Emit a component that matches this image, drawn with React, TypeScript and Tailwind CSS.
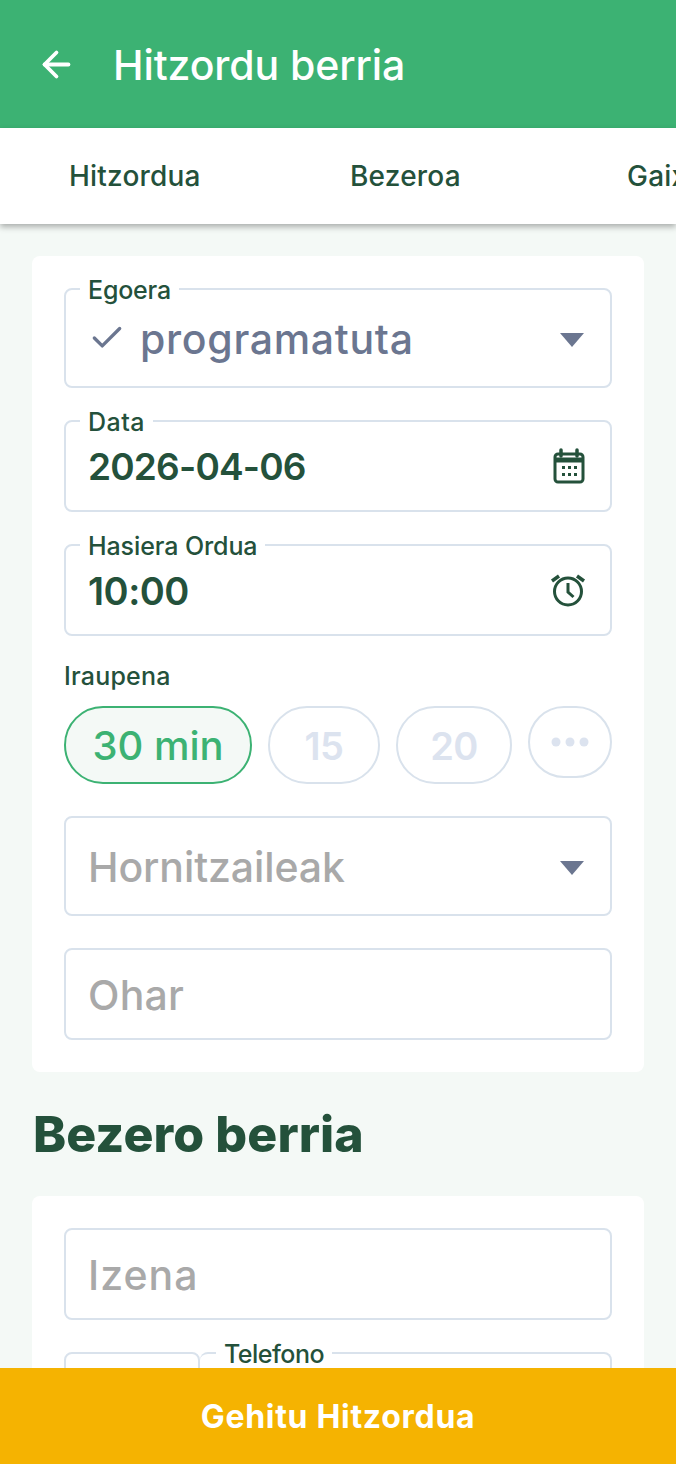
import React from "react";
import { ArrowLeft, Check } from "lucide-react";

const FONT = "font-['Inter','Liberation_Sans',sans-serif]";

function Caret() {
  return (
    <svg width="24" height="14" viewBox="0 0 24 14" className="mt-1 shrink-0">
      <path d="M0 0h24L12 14z" fill="#6b7690" />
    </svg>
  );
}

function CalendarIcon() {
  return (
    <svg width="32" height="36" viewBox="0 0 32 36" fill="none" className="mr-[-1px] shrink-0">
      <rect x="2" y="6" width="28" height="28" rx="3" stroke="#24513b" strokeWidth="3" />
      <path d="M2 9.500h28v5H2z" fill="#24513b" />
      <path d="M8 2v6M24 2v6" stroke="#24513b" strokeWidth="3.500" strokeLinecap="round" />
      <g fill="#24513b">
        <rect x="9" y="18" width="3" height="3" />
        <rect x="15" y="18" width="3" height="3" />
        <rect x="21" y="18" width="3" height="3" />
        <rect x="9" y="25" width="3" height="3" />
        <rect x="15" y="25" width="3" height="3" />
        <rect x="21" y="25" width="3" height="3" />
      </g>
    </svg>
  );
}

function AlarmIcon() {
  return (
    <svg width="36" height="34" viewBox="0 0 36 34" fill="none" className="mr-[-2px] shrink-0">
      <circle cx="18" cy="18.500" r="13.500" stroke="#24513b" strokeWidth="3" />
      <path d="M18 10v9l5.500 5" stroke="#24513b" strokeWidth="3" />
      <path d="M2 8l7-5M34 8l-7-5" stroke="#24513b" strokeWidth="3.500" />
    </svg>
  );
}

function Field({
  label,
  labelClass,
  className,
  children,
}: {
  label?: string;
  labelClass: string;
  className: string;
  children?: React.ReactNode;
}) {
  return (
    <div className={`relative flex items-center rounded-lg border-2 border-[#d9e2ec] bg-white pl-[22px] pr-[26px] ${className}`}>
      {label && (
        <span className={`absolute top-[-13px] bg-white px-2 text-[25px] font-medium leading-[26px] text-[#24513b] ${labelClass}`}>
          {label}
        </span>
      )}
      {children}
    </div>
  );
}

export default function App() {
  return (
    <div className={`flex h-[1464px] w-[676px] flex-col overflow-hidden bg-[#f4f9f6] ${FONT}`}>
      <header className="flex h-32 shrink-0 items-center bg-[#3cb273] pl-[36px] text-white">
        <ArrowLeft size={41} strokeWidth={2.200} />
        <h1 className="ml-[36px] mt-1 text-[41px] font-medium tracking-[-0.1px]">Hitzordu berria</h1>
      </header>

      <nav className="relative z-10 flex h-24 shrink-0 items-center overflow-hidden whitespace-nowrap bg-white pl-[69px] text-[28px] font-medium tracking-[0.2px] text-[#24513b] shadow-[0_3px_6px_rgba(0,0,0,0.3)]">
        <span className="w-[281px] shrink-0">Hitzordua</span>
        <span className="w-[277px] shrink-0">Bezeroa</span>
        <span className="shrink-0">Gaixoa</span>
      </nav>

      <main className="min-h-0 flex-1 overflow-hidden px-8 pt-8">
        <section className="flex flex-col rounded-lg bg-white p-8">
          <Field label="Egoera" labelClass="left-[14px] tracking-[-0.2px]" className="h-[100px]">
            <Check size={38} strokeWidth={2.100} className="mr-[14px] text-[#6b7690]" />
            <span className="mt-1 flex-1 text-[41px] font-medium tracking-[0.7px] text-[#6b7690]">programatuta</span>
            <Caret />
          </Field>
          <Field label="Data" labelClass="left-[14px] tracking-[0.5px]" className="mt-8 h-[92px]">
            <span className="mt-0.5 flex-1 text-[37px] font-semibold tracking-[-0.8px] text-[#24513b]">2026-04-06</span>
            <CalendarIcon />
          </Field>
          <Field label="Hasiera Ordua" labelClass="left-[14px] tracking-[-0.1px]" className="mt-8 h-[92px]">
            <span className="mt-0.5 flex-1 text-[38px] font-semibold tracking-[-0.5px] text-[#24513b]">10:00</span>
            <AlarmIcon />
          </Field>

          <div className="mt-[26px] text-[25px] font-medium leading-[28px] tracking-[0.2px] text-[#24513b]">Iraupena</div>
          <div className="mt-4 flex items-start justify-between">
            <button className="flex h-[78px] w-[188px] items-center justify-center rounded-[39px] border-2 border-[#3cb273] bg-[#f4f9f6] pt-0.5 text-[40px] font-medium text-[#3cb273]">
              30 min
            </button>
            <button className="flex h-[78px] w-[112px] items-center justify-center rounded-[39px] border-2 border-[#d9e2ec] pt-0.5 text-[38px] font-semibold tracking-[-0.5px] text-[#dce3ef]">
              15
            </button>
            <button className="flex h-[78px] w-[116px] items-center justify-center rounded-[39px] border-2 border-[#d9e2ec] pt-0.5 text-[38px] font-semibold tracking-[-0.5px] text-[#dce3ef]">
              20
            </button>
            <button className="flex h-[72px] w-[84px] items-center justify-center rounded-[36px] border-2 border-[#d9e2ec]">
              <svg width="38" height="10" viewBox="0 0 38 10" className="mt-[-1px]" fill="#dce3ef">
                <circle cx="5" cy="5" r="4.500" />
                <circle cx="19" cy="5" r="4.500" />
                <circle cx="33" cy="5" r="4.500" />
              </svg>
            </button>
          </div>

          <Field labelClass="" className="mt-8 h-[100px]">
            <span className="mt-1 flex-1 text-[41px] font-medium tracking-[-0.1px] text-[#a9a9a9]">Hornitzaileak</span>
            <Caret />
          </Field>
          <Field labelClass="" className="mt-8 h-[92px]">
            <span className="mt-1 text-[41px] font-medium tracking-[0.2px] text-[#a9a9a9]">Ohar</span>
          </Field>
        </section>

        <h2 className="ml-px mt-[30px] text-[50px] font-extrabold leading-[64px] tracking-[0.1px] text-[#24513b]">Bezero berria</h2>

        <section className="mt-[30px] flex flex-col rounded-lg bg-white p-8">
          <Field labelClass="" className="h-[92px]">
            <span className="mt-1 text-[41px] font-medium tracking-[1px] text-[#a9a9a9]">Izena</span>
          </Field>
          <div className="mt-8 flex">
            <div className="h-[92px] w-[136px] shrink-0 rounded-lg border-2 border-[#d9e2ec]" />
            <Field label="Telefono" labelClass="left-[16px] tracking-[-0.5px]" className="h-[92px] flex-1 border-l-0" />
          </div>
        </section>
      </main>

      <footer className="relative z-10 flex h-24 shrink-0 items-center justify-center bg-[#f5b301] pt-0.5 text-[32px] font-bold tracking-[0.7px] text-white">
        Gehitu Hitzordua
      </footer>
    </div>
  );
}
